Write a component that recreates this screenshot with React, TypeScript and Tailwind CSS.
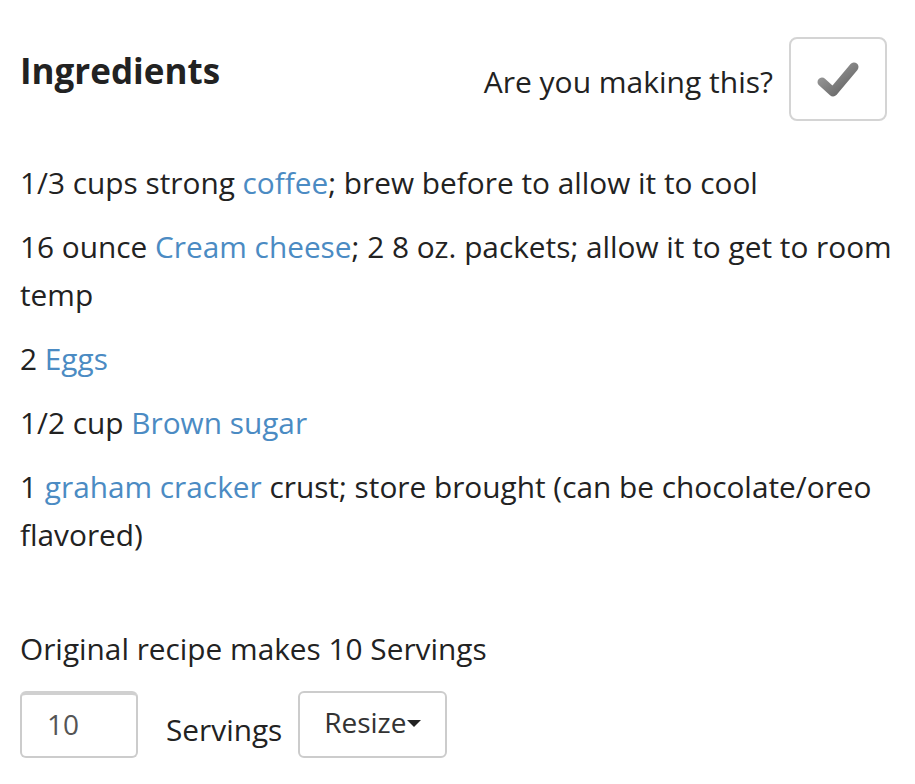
import React from 'react';

const link = 'text-[#4b8bc3]';

const ingredients: { pre: string; name: string; post: string }[] = [
  { pre: '1/3 cups strong ', name: 'coffee', post: '; brew before to allow it to cool' },
  { pre: '16 ounce ', name: 'Cream cheese', post: '; 2 8 oz. packets; allow it to get to room temp' },
  { pre: '2 ', name: 'Eggs', post: '' },
  { pre: '1/2 cup ', name: 'Brown sugar', post: '' },
  { pre: '1 ', name: 'graham cracker', post: ' crust; store brought (can be chocolate/oreo flavored)' },
];

const Check: React.FC = () => (
  <svg width="46" height="42" viewBox="0 0 46 42">
    <defs>
      <linearGradient id="chk" x1="0" y1="0" x2="1" y2="1">
        <stop offset="0" stopColor="#a0a0a0" />
        <stop offset="1" stopColor="#606060" />
      </linearGradient>
    </defs>
    <path d="M7 24 L18 34 L39 9" fill="none" stroke="url(#chk)" strokeWidth="9" strokeLinecap="round" strokeLinejoin="round" />
  </svg>
);

const App: React.FC = () => {
  return (
    <div className="w-[915px] h-[784px] bg-white text-[#222] font-['Open_Sans',sans-serif] overflow-hidden">
      <div className="px-5 pt-[37px]">
        {/* Header */}
        <div className="flex justify-between">
          <h2 className="text-[35px] font-bold leading-none mt-[16px] text-[#222]">Ingredients</h2>
          <div className="flex items-start gap-4 mr-[8px]">
            <span className="text-[30px] mt-[30px] leading-none text-[#222]">Are you making this?</span>
            <button className="w-[98px] h-[84px] border-2 border-[#d4d4d4] rounded-lg flex items-center justify-center bg-white">
              <Check />
            </button>
          </div>
        </div>

        {/* Ingredient list */}
        <ul className="mt-[38px] flex flex-col gap-4 text-[29.8px] leading-[48px]">
          {ingredients.map((it, i) => (
            <li key={i}>
              {it.pre}
              <a className={link}>{it.name}</a>
              {it.post}
            </li>
          ))}
        </ul>

        {/* Servings */}
        <p className="mt-[66px] text-[29.8px] leading-[48px]">Original recipe makes 10 Servings</p>
        <div className="mt-[18px] flex items-center">
          <div className="w-[118px] h-[67px] border-2 border-[#ccc] border-t-[4px] border-t-[#d0d0d0] rounded-md flex items-center pl-[25px] pb-[4px] text-[28px] text-[#555]">
            10
          </div>
          <span className="ml-[28px] mt-[12px] text-[29.8px]">Servings</span>
          <button className="ml-4 w-[149px] h-[67px] border-2 border-[#ccc] rounded-md flex items-center justify-center text-[28px] text-[#333] pb-[6px]">
            Resize
            <span className="ml-[1px] mt-[4px] inline-block border-x-[7px] border-x-transparent border-t-[7px] border-t-[#222]" />
          </button>
        </div>
      </div>
    </div>
  );
};

export default App;
